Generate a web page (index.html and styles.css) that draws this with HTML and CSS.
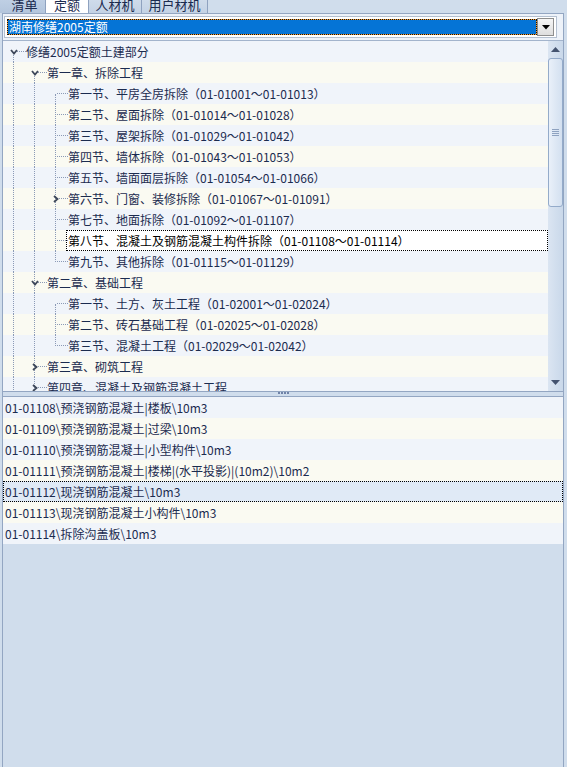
FILE: index.html
```html
<!DOCTYPE html>
<html lang="zh-CN">
<head>
  <meta charset="UTF-8" />
  <title>定额</title>
  <link rel="stylesheet" href="styles.css">
</head>
<body>
  <div class="tabs">
    <div class="tab first">清单</div>
    <div class="tab active">定额</div>
    <div class="tab">人材机</div>
    <div class="tab">用户材机</div>
  </div>

  <div class="main">
    <div class="combo-area">
      <div class="combo">
        <div class="combo-value">湖南修缮2005定额</div>
        <div class="combo-btn">
          <svg width="8" height="5" viewBox="0 0 8 5"><path d="M0 0H8L4 4.5Z" fill="#000"/></svg>
        </div>
      </div>
    </div>

    <div class="tree-panel">
      <div class="tree">
        <div class="row">
          <i class="c vb h"><svg class="tg" width="8" height="6" viewBox="0 0 8 6"><polyline points="1,1 4,4.5 7,1" fill="none" stroke="#3d4759" stroke-width="1.8"/></svg></i>
          <span class="label">修缮2005定额土建部分</span>
        </div>
        <div class="row alt">
          <i class="c v"></i>
          <i class="c vb h"><svg class="tg" width="8" height="6" viewBox="0 0 8 6"><polyline points="1,1 4,4.5 7,1" fill="none" stroke="#3d4759" stroke-width="1.8"/></svg></i>
          <span class="label">第一章、拆除工程</span>
        </div>
        <div class="row">
          <i class="c v"></i><i class="c v"></i><i class="c vb h"></i>
          <span class="label">第一节、平房全房拆除（01-01001～01-01013）</span>
        </div>
        <div class="row alt">
          <i class="c v"></i><i class="c v"></i><i class="c v h"></i>
          <span class="label">第二节、屋面拆除（01-01014～01-01028）</span>
        </div>
        <div class="row">
          <i class="c v"></i><i class="c v"></i><i class="c v h"></i>
          <span class="label">第三节、屋架拆除（01-01029～01-01042）</span>
        </div>
        <div class="row alt">
          <i class="c v"></i><i class="c v"></i><i class="c v h"></i>
          <span class="label">第四节、墙体拆除（01-01043～01-01053）</span>
        </div>
        <div class="row">
          <i class="c v"></i><i class="c v"></i><i class="c v h"></i>
          <span class="label">第五节、墙面面层拆除（01-01054～01-01066）</span>
        </div>
        <div class="row alt">
          <i class="c v"></i><i class="c v"></i>
          <i class="c v h"><svg class="tg" width="6" height="8" viewBox="0 0 6 8"><polyline points="1,1 4.5,4 1,7" fill="none" stroke="#3d4759" stroke-width="1.8"/></svg></i>
          <span class="label">第六节、门窗、装修拆除（01-01067～01-01091）</span>
        </div>
        <div class="row">
          <i class="c v"></i><i class="c v"></i><i class="c v h"></i>
          <span class="label">第七节、地面拆除（01-01092～01-01107）</span>
        </div>
        <div class="row alt">
          <i class="c v"></i><i class="c v"></i><i class="c v h"></i>
          <span class="label selected">第八节、混凝土及钢筋混凝土构件拆除（01-01108～01-01114）</span>
        </div>
        <div class="row">
          <i class="c v"></i><i class="c v"></i><i class="c vt h"></i>
          <span class="label">第九节、其他拆除（01-01115～01-01129）</span>
        </div>
        <div class="row alt">
          <i class="c v"></i>
          <i class="c v h"><svg class="tg" width="8" height="6" viewBox="0 0 8 6"><polyline points="1,1 4,4.5 7,1" fill="none" stroke="#3d4759" stroke-width="1.8"/></svg></i>
          <span class="label">第二章、基础工程</span>
        </div>
        <div class="row">
          <i class="c v"></i><i class="c v"></i><i class="c vb h"></i>
          <span class="label">第一节、土方、灰土工程（01-02001～01-02024）</span>
        </div>
        <div class="row alt">
          <i class="c v"></i><i class="c v"></i><i class="c v h"></i>
          <span class="label">第二节、砖石基础工程（01-02025～01-02028）</span>
        </div>
        <div class="row">
          <i class="c v"></i><i class="c v"></i><i class="c vt h"></i>
          <span class="label">第三节、混凝土工程（01-02029～01-02042）</span>
        </div>
        <div class="row alt">
          <i class="c v"></i>
          <i class="c v h"><svg class="tg" width="6" height="8" viewBox="0 0 6 8"><polyline points="1,1 4.5,4 1,7" fill="none" stroke="#3d4759" stroke-width="1.8"/></svg></i>
          <span class="label">第三章、砌筑工程</span>
        </div>
        <div class="row">
          <i class="c v"></i>
          <i class="c v h"><svg class="tg" width="6" height="8" viewBox="0 0 6 8"><polyline points="1,1 4.5,4 1,7" fill="none" stroke="#3d4759" stroke-width="1.8"/></svg></i>
          <span class="label">第四章、混凝土及钢筋混凝土工程</span>
        </div>
      </div>

      <div class="vscroll">
        <div class="sb-btn">
          <svg width="9" height="5" viewBox="0 0 9 5"><path d="M0 5H9L4.5 0Z" fill="#44536f"/></svg>
        </div>
        <div class="sb-thumb">
          <div class="grip"></div>
        </div>
        <div class="sb-track"></div>
        <div class="sb-btn">
          <svg width="9" height="5" viewBox="0 0 9 5"><path d="M0 0H9L4.5 5Z" fill="#44536f"/></svg>
        </div>
      </div>
    </div>

    <div class="splitter"><span class="dots"></span></div>

    <div class="list">
      <div class="item">01-01108\预浇钢筋混凝土|楼板\10m3</div>
      <div class="item alt">01-01109\预浇钢筋混凝土|过梁\10m3</div>
      <div class="item">01-01110\预浇钢筋混凝土|小型构件\10m3</div>
      <div class="item alt">01-01111\预浇钢筋混凝土|楼梯|(水平投影)|(10m2)\10m2</div>
      <div class="item selected">01-01112\现浇钢筋混凝土\10m3</div>
      <div class="item alt">01-01113\现浇钢筋混凝土小构件\10m3</div>
      <div class="item">01-01114\拆除沟盖板\10m3</div>
    </div>
  </div>
</body>
</html>
```

FILE: styles.css
```css
body {
  margin: 0;
  height: 767px;
  overflow: hidden;
  background: #d0ddec;
  font-family: "Noto Sans CJK SC", "Liberation Sans", sans-serif;
  font-size: 12px;
  color: #1b2b4f;
}

/* Tabs (top edge is cut off in the window) */
.tabs {
  display: flex;
  height: 13px;
  overflow: hidden;
}

.tab {
  height: 20px;
  margin-top: -5px;
  line-height: 18px;
  border: 1px solid #8fa2bf;
  border-left: none;
  background: linear-gradient(#d2deec, #c3d2e5);
  color: #1b2b4f;
  font-size: 13px;
  text-align: center;
  white-space: nowrap;
  box-sizing: border-box;
}

.tab.first {
  width: 46px;
  padding-left: 4px;
  background: linear-gradient(#c2d2e6, #b3c5dc);
}

.tab.active {
  width: 43px;
  background: #fff;
}

.tab:nth-child(3) { width: 53px; }
.tab:nth-child(4) { width: 66px; }

/* Main frame */
.main {
  margin-left: 2px;
  width: 560px;
  height: 753px;
  border: 1px solid #93a6c2;
  border-bottom: none;
  display: flex;
  flex-direction: column;
}

.combo-area {
  height: 22px;
  padding: 2px 6px 2px 1px;
  background: #edf2f9;
}

.combo {
  display: flex;
  align-items: center;
  height: 22px;
  box-sizing: border-box;
  padding: 2px;
  border: 1px solid #b4c0d0;
  background: #fff;
}

.combo-value {
  flex: 1;
  height: 16px;
  box-sizing: border-box;
  border: 1px dotted #111;
  background: linear-gradient(#0574d6, #0574d6) padding-box, linear-gradient(#f39c32, #f39c32) border-box;
  color: #fff;
  line-height: 14px;
  padding-left: 1px;
  font-size: 12px;
}

.combo-btn {
  width: 17px;
  height: 18px;
  margin: -1px 0;
  box-sizing: border-box;
  border: 1px solid #8e8e8e;
  background: linear-gradient(#f6f6f6, #dedede);
  display: flex;
  align-items: center;
  justify-content: center;
}

/* Tree */
.tree-panel {
  display: flex;
  height: 350px;
  border-top: 1px solid #a3b4cc;
  border-bottom: 1px solid #93a6c2;
  overflow: hidden;
}

.tree {
  flex: 1;
  overflow: hidden;
  background: #f0f4fa;
}

.row {
  display: flex;
  height: 21px;
  background: #f0f4fa;
  white-space: nowrap;
}

.row.alt {
  background: #fafaf2;
}

.c {
  flex: none;
  width: 21px;
  height: 21px;
  position: relative;
}

.c::before,
.c::after {
  content: "";
  position: absolute;
}

.c.v::before,
.c.vt::before,
.c.vb::before {
  left: 10px;
  border-left: 1px dotted #8b9ab6;
}

.c.v::before { top: 0; bottom: 0; }
.c.vt::before { top: 0; height: 11px; }
.c.vb::before { top: 11px; bottom: 0; }

.c.h::after {
  left: 12px;
  right: -2px;
  top: 10px;
  border-top: 1px dotted #8b9ab6;
}

.tg {
  position: absolute;
  left: 50%;
  top: 50%;
  transform: translate(-50%, -50%);
  z-index: 1;
}

.label {
  padding-left: 2px;
  line-height: 21px;
}

.label.selected {
  flex: 1;
  background: #fff;
  color: #000;
  border: 1px dotted #000;
  line-height: 19px;
  padding-left: 1px;
}

/* Scrollbar */
.vscroll {
  width: 15px;
  display: flex;
  flex-direction: column;
  background: linear-gradient(90deg, #dbe5f2, #c9d8ea);
}

.sb-btn {
  height: 17px;
  display: flex;
  align-items: center;
  justify-content: center;
}

.sb-thumb {
  height: 149px;
  box-sizing: border-box;
  border: 1px solid #94abca;
  border-radius: 3px;
  background: linear-gradient(90deg, #e9f0f9, #d3e0f0);
  display: flex;
  align-items: center;
  justify-content: center;
}

.grip {
  width: 7px;
  height: 7px;
  background: repeating-linear-gradient(#8ea2c0 0 1px, transparent 1px 2px);
}

.sb-track {
  flex: 1;
}

/* Splitter */
.splitter {
  height: 4px;
  display: flex;
  justify-content: center;
}

.dots {
  width: 12px;
  height: 2px;
  margin-left: 2px;
  background: repeating-linear-gradient(90deg, #7083a8 0 2px, transparent 2px 3px);
}

/* Lower list */
.list {
  flex: 1;
  border-top: 1px solid #93a6c2;
  background: #d0ddec;
}

.item {
  height: 21px;
  line-height: 21px;
  padding-left: 2px;
  background: #f0f4fa;
  white-space: nowrap;
}

.item.alt {
  background: #fafaf2;
}

.item.selected {
  background: #e0eaf6;
  border: 1px dotted #000;
  line-height: 19px;
  padding-left: 1px;
  box-sizing: border-box;
}
```
